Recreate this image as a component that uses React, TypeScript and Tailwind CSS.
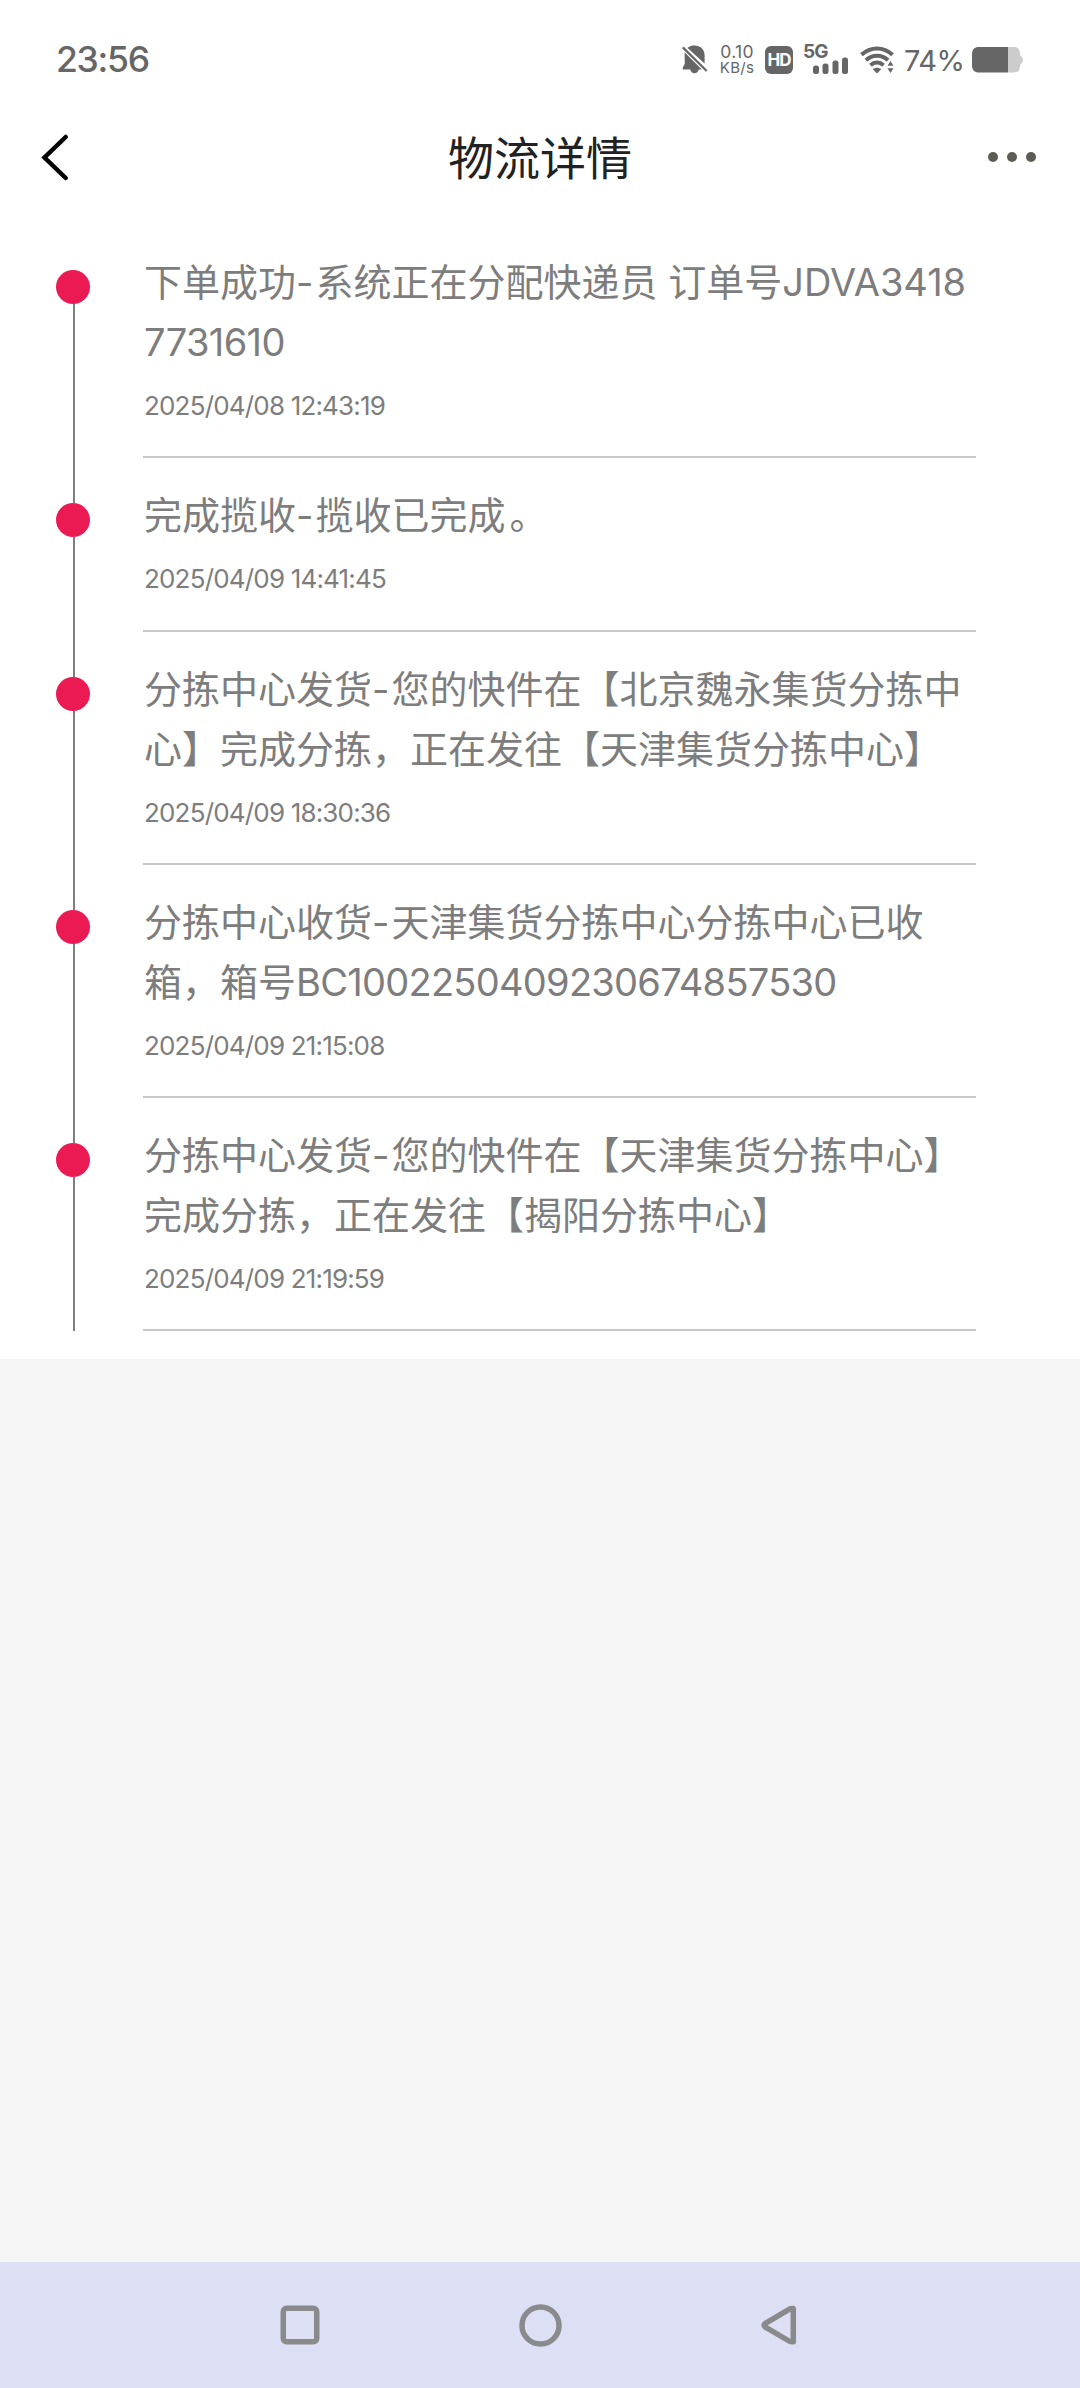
type Segment = {
  text: string;
  className?: string;
};

type TrackingEvent = {
  lines: Segment[][];
  time: string;
};

const hyphen: Segment = { text: "-", className: "tracking-[2px]" };

const events: TrackingEvent[] = [
  {
    lines: [
      [
        { text: "下单成功" },
        hyphen,
        { text: "系统正在分配快递员 订单号" },
        { text: "JDVA3418" },
      ],
      [{ text: "7731610", className: "tracking-[-0.6px]" }],
    ],
    time: "2025/04/08 12:43:19",
  },
  {
    lines: [
      [
        { text: "完成揽收" },
        hyphen,
        { text: "揽收已完成" },
        { text: "。", className: "ml-1" },
      ],
    ],
    time: "2025/04/09 14:41:45",
  },
  {
    lines: [
      [{ text: "分拣中心发货" }, hyphen, { text: "您的快件在【北京魏永集货分拣中" }],
      [{ text: "心】完成分拣，正在发往【天津集货分拣中心】" }],
    ],
    time: "2025/04/09 18:30:36",
  },
  {
    lines: [
      [{ text: "分拣中心收货" }, hyphen, { text: "天津集货分拣中心分拣中心已收" }],
      [
        { text: "箱，箱号" },
        { text: "BC1002250409230674857530", className: "tracking-[-0.72px]" },
      ],
    ],
    time: "2025/04/09 21:15:08",
  },
  {
    lines: [
      [{ text: "分拣中心发货" }, hyphen, { text: "您的快件在【天津集货分拣中心】" }],
      [{ text: "完成分拣，正在发往【揭阳分拣中心】" }],
    ],
    time: "2025/04/09 21:19:59",
  },
];

function MutedBellIcon() {
  return (
    <svg width="26" height="30" viewBox="0 0 26 30" fill="currentColor">
      <path d="M5.500 2.900C7.500 1.200 10 .6 12.600.6c5.600 0 10 4.200 10 9.600v8.200L5.500 2.900Z" />
      <path d="M2.600 7 21 24.500H.8v-2.300l2-3.200Z" />
      <path d="M8.300 24h8.400a4.200 4.200 0 0 1-8.400 0Z" />
      <path d="M.8 2.400 24.700 26" stroke="white" strokeWidth="4.600" />
      <path d="M.8 2.400 24.700 26" stroke="currentColor" strokeWidth="2.200" />
    </svg>
  );
}

function SignalIcon() {
  return (
    <svg width="36" height="18" viewBox="0 0 36 18" fill="currentColor">
      <rect x="0" y="8.500" width="6" height="8.500" rx="2.500" />
      <rect x="9.500" y="6.500" width="6" height="10.500" rx="2.500" />
      <rect x="19.500" y="3.500" width="6" height="13.500" rx="2.500" />
      <rect x="29" y="0.500" width="6" height="16.500" rx="2.500" />
    </svg>
  );
}

function WifiIcon() {
  return (
    <svg width="34" height="28" viewBox="0 0 34 28" fill="none">
      <g stroke="currentColor" strokeWidth="4">
        <path d="M1.500 8.700C10.500.3 23.500.3 32.500 8.700" />
        <path d="M6 14.200C12.300 8.300 21.700 8.300 28 14.200" />
        <path d="M10.500 19.200C14.300 15.700 19.700 15.700 23.500 19.200" />
      </g>
      <path d="M12.800 23.300c2.500-2 5.900-2 8.400 0L17 27.500Z" fill="currentColor" />
      <path d="M26 21.500v-1l4.500-6.500 4.500 6.500v8h-9Z" fill="white" />
      <path d="m30.500 15 3 4.800h-6ZM30.500 27l3-4.800h-6Z" fill="currentColor" />
    </svg>
  );
}

function BatteryIcon() {
  return (
    <svg width="52" height="26" viewBox="0 0 52 26">
      <path
        d="M36 0h6c3.500 0 5.500 2 6 6l.5 3c1.800.8 2.500 2 2.500 4s-.7 3.200-2.500 4l-.5 3c-.5 4-2.500 5.500-6 5.500h-6Z"
        fill="#cccccc"
      />
      <path d="M36 0v25.500H7c-4.500 0-7-2.500-7-7V7c0-4.500 2.500-7 7-7Z" fill="currentColor" />
    </svg>
  );
}

function StatusBar() {
  return (
    <div className="flex h-[118px] items-center justify-between pl-14 pr-14 pt-0.5 text-[#666666]">
      <span className="text-[35.5px] font-medium leading-none tracking-[-1.3px]">23:56</span>
      <div className="flex items-center">
        <MutedBellIcon />
        <div className="ml-3 flex w-[34px] flex-col items-center text-[17.5px] leading-4">
          <span className="tracking-[0.3px]">0.10</span>
          <span className="text-[15px] tracking-[0.3px]">KB/s</span>
        </div>
        <div className="ml-[11px] flex size-7 items-center justify-center rounded-[6px] bg-[#666666] text-[17px] font-bold leading-none tracking-[-1px] text-white">
          HD
        </div>
        <div className="ml-[10px] flex w-[46px] flex-col">
          <span className="h-[13px] text-[19px] font-bold leading-[13px] tracking-[-1px]">5G</span>
          <div className="-mt-px ml-[10px]">
            <SignalIcon />
          </div>
        </div>
        <div className="ml-[11px]">
          <WifiIcon />
        </div>
        <span className="ml-[10px] w-[60px] text-[29px] leading-none tracking-[-0.5px]">74%</span>
        <div className="ml-2">
          <BatteryIcon />
        </div>
      </div>
    </div>
  );
}

function Header() {
  return (
    <header className="flex h-[107px] items-start justify-between px-10 pt-[15px]">
      <button aria-label="返回" className="w-[50px]">
        <svg width="30" height="50" viewBox="0 0 30 50" fill="none">
          <path
            d="M25.700 4 4.500 24.500 25.700 45"
            stroke="black"
            strokeWidth="4.500"
            strokeLinecap="round"
          />
        </svg>
      </button>
      <h1 className="text-[46px] font-normal leading-[50px] text-[#222222]">物流详情</h1>
      <button aria-label="更多" className="flex h-12 w-[50px] items-center justify-end gap-[9px] pr-1">
        <span className="size-[10px] shrink-0 rounded-full bg-[#5c5c54]" />
        <span className="size-[10px] shrink-0 rounded-full bg-[#5c5c54]" />
        <span className="size-[10px] shrink-0 rounded-full bg-[#5c5c54]" />
      </button>
    </header>
  );
}

function TimelineItem({ event, first }: { event: TrackingEvent; first: boolean }) {
  return (
    <li className="flex">
      <div className="flex w-[34px] shrink-0 flex-col items-center">
        <div className={first ? "h-[45px]" : "ml-[2px] h-[45px] w-[2px] bg-[#808080]"} />
        <div className="size-[34px] rounded-full bg-[#ec1a52]" />
        <div className="ml-[2px] w-[2px] flex-1 bg-[#808080]" />
      </div>
      <div className="ml-[53px] w-[833px] border-b-2 border-[#c8c8c8] pt-[27px]">
        <div className="pl-px text-[38px] leading-[60px]">
          {event.lines.map((line, i) => (
            <p key={i} className="whitespace-nowrap">
              {line.map((segment, j) => (
                <span key={j} className={segment.className}>
                  {segment.text}
                </span>
              ))}
            </p>
          ))}
        </div>
        <p className="h-[84.3px] pl-px pt-[14px] text-[26px] leading-10 tracking-[-0.82px]">
          {event.time}
        </p>
      </div>
    </li>
  );
}

function NavigationBar() {
  return (
    <nav className="flex h-[126px] items-center justify-center gap-[196px] bg-[#dddff4] text-[#888a8c]">
      <svg width="44" height="44" viewBox="0 0 44 44" fill="none" stroke="currentColor" strokeWidth="5.500">
        <rect x="5.250" y="5.250" width="33.500" height="33.500" rx="3.500" />
      </svg>
      <svg width="44" height="44" viewBox="0 0 44 44" fill="none" stroke="currentColor" strokeWidth="5.500">
        <circle cx="22.500" cy="22.500" r="18.500" />
      </svg>
      <svg
        width="44"
        height="44"
        viewBox="0 0 44 44"
        fill="none"
        stroke="currentColor"
        strokeWidth="5.500"
        strokeLinejoin="round"
      >
        <path d="M35.300 5.500v33.200L31.900 38.500 7 23.800c-1.300-.8-1.300-2.300 0-3.100L31.900 5.800Z" />
      </svg>
    </nav>
  );
}

export default function App() {
  return (
    <div className="flex h-[2388px] w-[1080px] flex-col bg-[#f5f5f5] font-['Inter','Noto_Sans_CJK_SC',sans-serif]">
      <div className="h-[1359px] bg-white">
        <StatusBar />
        <Header />
        <ul className="pl-14 text-[#7d7d7d]">
          {events.map((event, i) => (
            <TimelineItem key={event.time} event={event} first={i === 0} />
          ))}
        </ul>
      </div>
      <div className="flex-1" />
      <NavigationBar />
    </div>
  );
}
